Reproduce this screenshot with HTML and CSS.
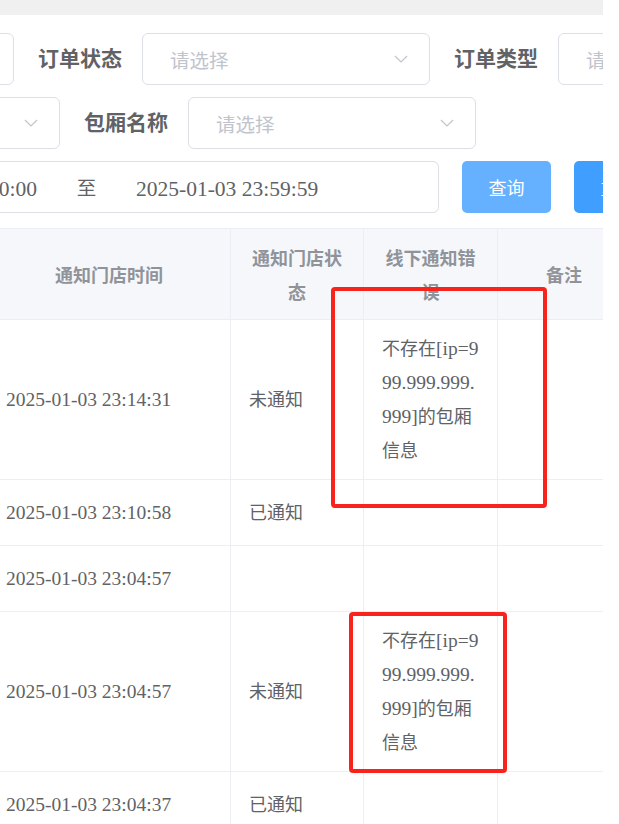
FILE: index.html
```html
<!DOCTYPE html>
<html lang="zh-CN">
<head>
    <meta charset="UTF-8">
    <meta name="viewport" content="width=device-width, initial-scale=1.0">
    <title>包厢订单通知</title>
    <link rel="stylesheet" href="styles.css">
</head>
<body>
    <div class="page">
        <div class="topbar"></div>

        <!-- Search form -->
        <div class="search-form">
            <div class="form-row">
                <div class="input first-input"></div>
                <div class="form-item">
                    <label>订单状态</label>
                    <div class="select">
                        <span class="placeholder">请选择</span>
                        <svg class="arrow" width="14" height="8" viewBox="0 0 14 8"><path d="M1 1l6 6 6-6" fill="none" stroke="#c0c4cc" stroke-width="1.2"/></svg>
                    </div>
                </div>
                <div class="form-item">
                    <label>订单类型</label>
                    <div class="select">
                        <span class="placeholder">请选择</span>
                        <svg class="arrow" width="14" height="8" viewBox="0 0 14 8"><path d="M1 1l6 6 6-6" fill="none" stroke="#c0c4cc" stroke-width="1.2"/></svg>
                    </div>
                </div>
            </div>

            <div class="form-row">
                <div class="select first-select">
                    <span class="placeholder">请选择</span>
                    <svg class="arrow" width="14" height="8" viewBox="0 0 14 8"><path d="M1 1l6 6 6-6" fill="none" stroke="#c0c4cc" stroke-width="1.2"/></svg>
                </div>
                <div class="form-item">
                    <label>包厢名称</label>
                    <div class="select">
                        <span class="placeholder">请选择</span>
                        <svg class="arrow" width="14" height="8" viewBox="0 0 14 8"><path d="M1 1l6 6 6-6" fill="none" stroke="#c0c4cc" stroke-width="1.2"/></svg>
                    </div>
                </div>
            </div>

            <div class="form-row">
                <div class="date-range">
                    <span class="date-start">2025-01-03 00:00:00</span>
                    <span class="date-sep">至</span>
                    <span class="date-end">2025-01-03 23:59:59</span>
                </div>
                <button type="button" class="btn btn-search">查询</button>
                <button type="button" class="btn btn-primary">重置</button>
            </div>
        </div>

        <!-- Order table -->
        <table class="order-table">
            <colgroup>
                <col class="col-time">
                <col class="col-status">
                <col class="col-error">
                <col class="col-remark">
            </colgroup>
            <thead>
                <tr>
                    <th>通知门店时间</th>
                    <th>通知门店状态</th>
                    <th>线下通知错误</th>
                    <th>备注</th>
                </tr>
            </thead>
            <tbody>
                <tr>
                    <td class="time">2025-01-03 23:14:31</td>
                    <td>未通知</td>
                    <td>不存在<span class="en">[ip=9</span><br><span class="en">99.999.999.</span><br><span class="en">999]</span>的包厢<br>信息</td>
                    <td></td>
                </tr>
                <tr>
                    <td class="time">2025-01-03 23:10:58</td>
                    <td>已通知</td>
                    <td></td>
                    <td></td>
                </tr>
                <tr>
                    <td class="time">2025-01-03 23:04:57</td>
                    <td></td>
                    <td></td>
                    <td></td>
                </tr>
                <tr>
                    <td class="time">2025-01-03 23:04:57</td>
                    <td>未通知</td>
                    <td>不存在<span class="en">[ip=9</span><br><span class="en">99.999.999.</span><br><span class="en">999]</span>的包厢<br>信息</td>
                    <td></td>
                </tr>
                <tr>
                    <td class="time">2025-01-03 23:04:37</td>
                    <td>已通知</td>
                    <td></td>
                    <td></td>
                </tr>
            </tbody>
        </table>

        <!-- Red review marks -->
        <div class="mark mark-1"></div>
        <div class="mark mark-2"></div>
    </div>
</body>
</html>
```

FILE: styles.css
```css
/* Basic Reset */
html, body {
    margin: 0;
    padding: 0;
    overflow: hidden;
    background: #fff;
    font-family: "Liberation Serif", "Noto Sans CJK SC", serif;
    color: #606266;
}

.page {
    position: relative;
    width: 603px;
    height: 824px;
    overflow: hidden;
}

.topbar {
    height: 15px;
    background: #f0f0f0;
}

/* Search form */
.search-form {
    padding-top: 18px;
}

.form-row {
    display: flex;
    align-items: center;
    height: 52px;
    margin-bottom: 12px;
    white-space: nowrap;
}

.form-item {
    display: flex;
    align-items: center;
    margin-right: 24px;
}

.form-item label {
    font-family: "Noto Sans CJK SC", sans-serif;
    font-size: 21px;
    font-weight: bold;
    color: #606266;
    margin-right: 20px;
    padding-bottom: 4px;
}

.input,
.select,
.date-range {
    box-sizing: border-box;
    height: 52px;
    border: 1px solid #dcdfe6;
    border-radius: 6px;
    background: #fff;
    flex-shrink: 0;
}

.select {
    width: 288px;
    display: flex;
    align-items: center;
    justify-content: space-between;
    padding: 0 21px 0 27px;
}

.placeholder {
    font-family: "Noto Sans CJK SC", sans-serif;
    font-size: 19.5px;
    color: #c0c4cc;
}

.arrow {
    display: block;
}

.first-input {
    width: 288px;
    margin-left: -274px;
    margin-right: 24px;
}

.first-select {
    margin-left: -228px;
    margin-right: 24px;
}

/* Date range */
.date-range {
    width: 739px;
    margin-left: -300px;
    padding-top: 4px;
    display: flex;
    align-items: center;
    font-size: 21.5px;
    color: #606266;
}

.date-start {
    width: 336px;
    text-align: right;
}

.date-sep {
    width: 99px;
    text-align: center;
    font-family: "Noto Sans CJK SC", sans-serif;
    font-size: 19.5px;
    padding-bottom: 6px;
}

.btn {
    flex-shrink: 0;
    height: 52px;
    width: 89px;
    margin-left: 23px;
    border: none;
    border-radius: 5px;
    color: #fff;
    font-family: "Noto Sans CJK SC", sans-serif;
    font-size: 18px;
    padding: 0;
}

.btn-search {
    background: #66b1ff;
}

.btn-primary {
    background: #409eff;
}

/* Table */
.order-table {
    margin-top: 15px;
    margin-left: -13px;
    width: 643px;
    table-layout: fixed;
    border-collapse: collapse;
    font-size: 18px;
}

.col-time { width: 243px; }
.col-status { width: 133px; }
.col-error { width: 134px; }
.col-remark { width: 133px; }

.order-table th,
.order-table td {
    border: 1px solid #ebeef5;
    padding: 12px 18px 11px;
    line-height: 34px;
    vertical-align: middle;
    text-align: left;
    font-family: "Liberation Serif", "Noto Sans CJK SC", serif;
}

.order-table th {
    padding: 11px 18px;
    background: #f5f7fa;
    color: #909399;
    font-weight: bold;
    text-align: center;
    font-family: "Noto Sans CJK SC", sans-serif;
}

.order-table tbody tr {
    height: 66px;
}

.order-table td {
    color: #606266;
}

.order-table td.time,
.order-table .en {
    font-size: 19.5px;
}

/* Review marks drawn over the table */
.mark {
    position: absolute;
    border: 4px solid #f8231d;
    border-radius: 4px;
}

.mark-1 {
    left: 331px;
    top: 287px;
    width: 208px;
    height: 213px;
}

.mark-2 {
    left: 349px;
    top: 612px;
    width: 150px;
    height: 153px;
}
```
